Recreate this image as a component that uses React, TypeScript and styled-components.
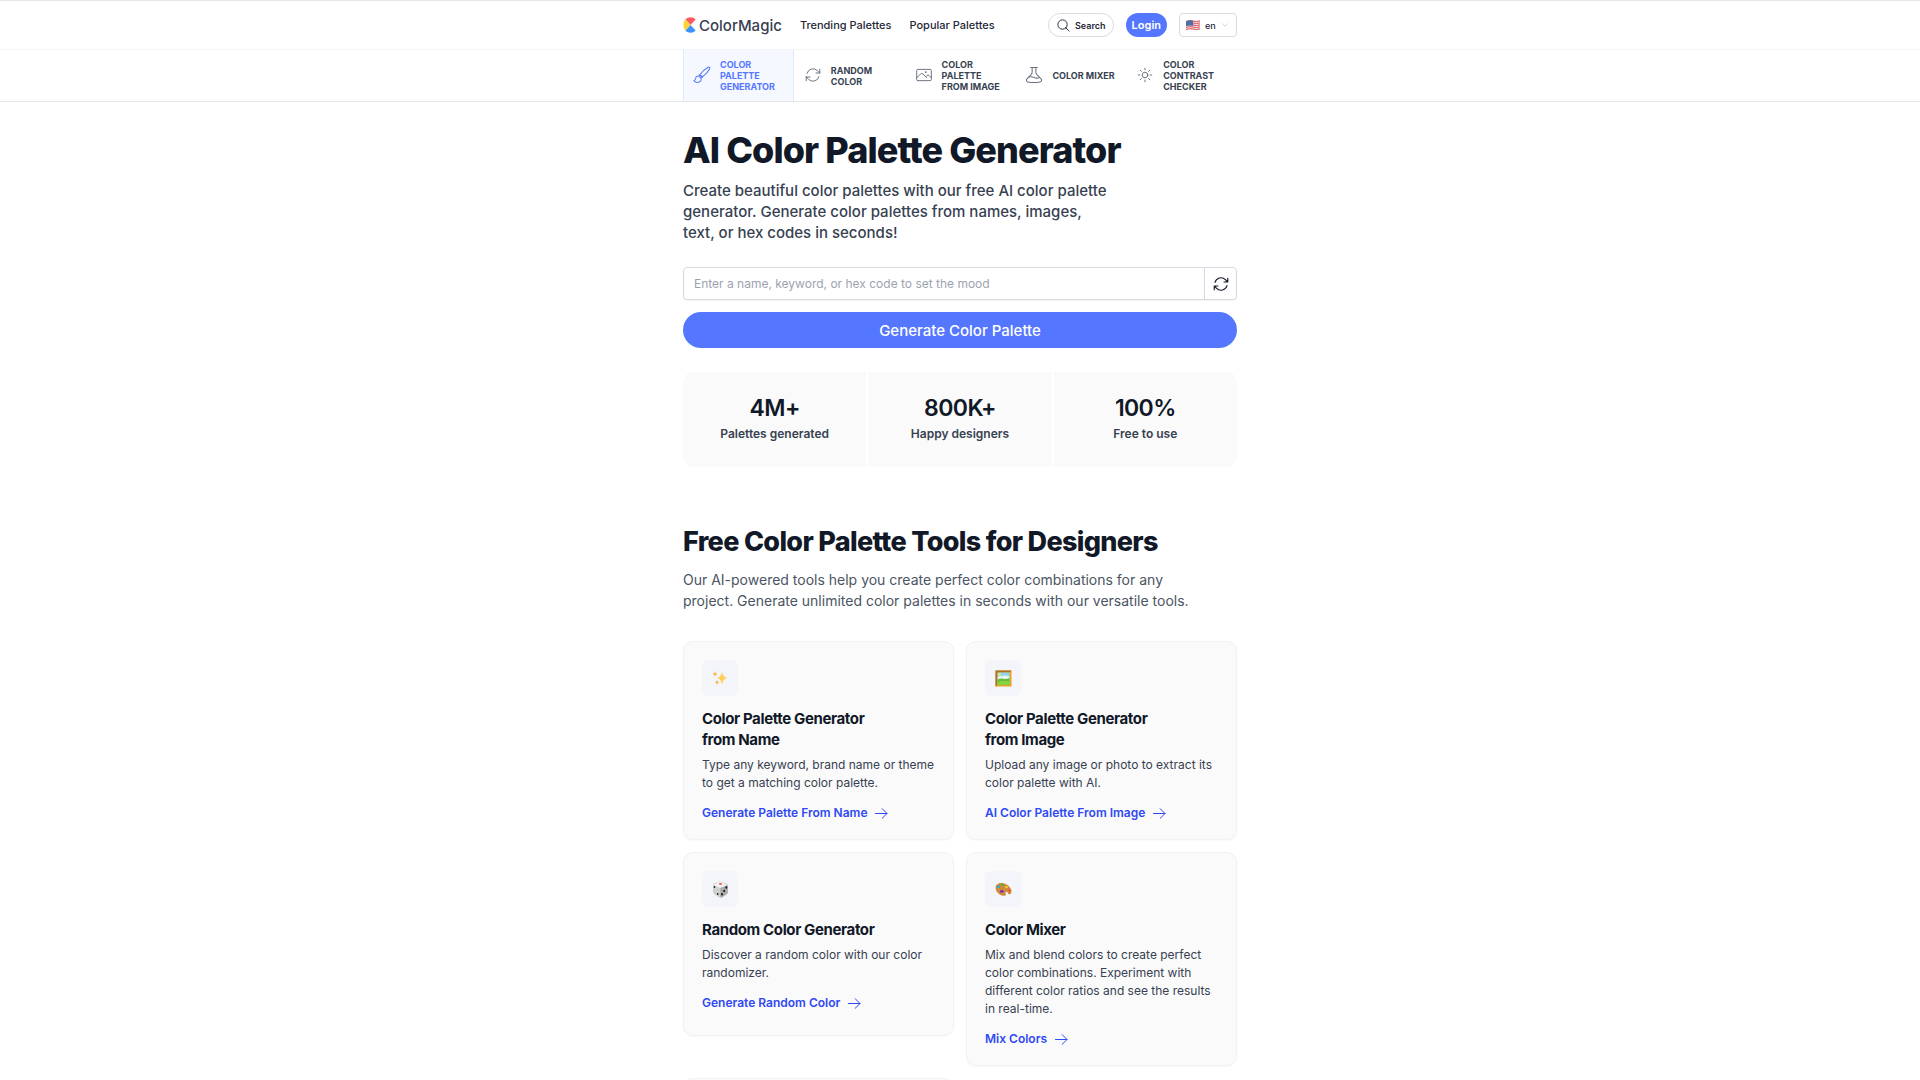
import React from "react";
import styled, { createGlobalStyle } from "styled-components";
import {
  HiOutlineArrowPath,
  HiOutlinePhoto,
  HiOutlineSun,
  HiOutlineMagnifyingGlass,
  HiOutlineChevronDown,
} from "react-icons/hi2";

const GlobalStyle = createGlobalStyle`
  *, *::before, *::after { box-sizing: border-box; }
  body {
    margin: 0;
    background: #fff;
    color: #111827;
    font-family: Inter, "Liberation Sans", sans-serif;
    font-size: 12px;
    overflow-x: hidden;
    -webkit-font-smoothing: antialiased;
  }
  h1, h2, h3, p, ul { margin: 0; padding: 0; }
  ul { list-style: none; }
  a { color: inherit; text-decoration: none; }
  button, input, select { font: inherit; color: inherit; }
  svg { display: block; flex-shrink: 0; }
`;

const Container = styled.div`
  width: 100%;
  max-width: 578px;
  margin: 0 auto;
  padding: 0 12px;
`;

const Header = styled.header`
  border-top: 1px solid #e5e7eb;
  border-bottom: 1px solid #f3f4f6;
`;

const HeaderRow = styled(Container)`
  display: flex;
  align-items: center;
  justify-content: space-between;
  height: 48px;
`;

const MainNav = styled.nav`
  display: flex;
  align-items: center;
  gap: 18px;
  font-size: 11px;
  font-weight: 500;
  color: #1f2937;
`;

const Brand = styled.a`
  display: flex;
  align-items: center;
  gap: 3px;
  font-size: 15px;
  font-weight: 500;
  color: #374151;
`;

const Actions = styled.div`
  display: flex;
  align-items: center;
  gap: 12px;
`;

const SearchButton = styled.button`
  display: flex;
  align-items: center;
  gap: 4px;
  height: 24px;
  padding: 0 7px;
  border: 1px solid #d8dbe2;
  border-radius: 12px;
  background: #fff;
  font-size: 9px;
  font-weight: 600;
  color: #1f2937;
`;

const LoginButton = styled.button`
  height: 24px;
  padding: 0 6px;
  border: 0;
  border-radius: 12px;
  background: #5577ff;
  color: #fff;
  font-size: 11px;
  font-weight: 600;
`;

const Language = styled.label`
  display: flex;
  align-items: center;
  gap: 5px;
  height: 24px;
  padding: 0 7px 0 6px;
  border: 1px solid #d8dbe2;
  border-radius: 4px;
  font-size: 9px;
  font-weight: 500;
  color: #1f2937;
`;

const LanguageSelect = styled.select`
  appearance: none;
  width: 11px;
  padding: 0;
  border: 0;
  background: transparent;
  outline: none;
`;

const ToolNav = styled.nav`
  border-bottom: 1px solid #e5e7eb;
`;

const ToolTabs = styled.ul`
  display: grid;
  grid-template-columns: repeat(5, 1fr);
`;

const ToolTab = styled.a<{ $active?: boolean }>`
  display: flex;
  align-items: center;
  gap: 9px;
  height: 51px;
  padding: 0 8px 0 9px;
  border: solid ${(p) => (p.$active ? "#dbeafe" : "transparent")};
  border-width: 0 1px;
  background: ${(p) => (p.$active ? "#f5f8ff" : "transparent")};
  color: ${(p) => (p.$active ? "#5577ff" : "#374151")};
  font-size: 9px;
  font-weight: 700;
  line-height: 11px;
  text-transform: uppercase;

  svg {
    margin-bottom: 2px;
    color: ${(p) => (p.$active ? "#5577ff" : "#6b7280")};
  }
`;

const Hero = styled.section`
  padding-top: 30px;
`;

const Title = styled.h1`
  font-size: 36px;
  font-weight: 800;
  line-height: 36px;
  letter-spacing: -0.025em;
`;

const Lead = styled.p`
  max-width: 432px;
  margin-top: 12px;
  font-size: 15px;
  font-weight: 500;
  line-height: 21px;
  color: #374151;
`;

const Prompt = styled.form`
  display: grid;
  gap: 12px;
  margin-top: 24px;
`;

const Field = styled.div`
  display: flex;
  height: 33px;
  border: 1px solid #d6d9e0;
  border-radius: 4px;
  box-shadow: 0 1px 2px rgba(0, 0, 0, 0.05);
`;

const PromptInput = styled.input`
  flex: 1;
  min-width: 0;
  padding: 0 10px;
  border: 0;
  outline: none;
  background: transparent;
  font-size: 12px;

  &::placeholder { color: #9ca3af; opacity: 1; }
`;

const ShuffleButton = styled.button`
  display: grid;
  place-items: center;
  width: 32px;
  padding: 0;
  border: 0;
  border-left: 1px solid #d6d9e0;
  background: transparent;
`;

const GenerateButton = styled.button`
  height: 36px;
  border: 0;
  border-radius: 18px;
  background: #5577ff;
  color: #fff;
  font-size: 15px;
  font-weight: 500;
`;

const Stats = styled.ul`
  display: grid;
  grid-template-columns: repeat(3, 1fr);
  gap: 2px;
  margin-top: 24px;
  border-radius: 10px;
  overflow: hidden;
`;

const Stat = styled.li`
  padding: 24px;
  background: #fafafa;
  text-align: center;
`;

const StatValue = styled.p`
  font-size: 23px;
  font-weight: 600;
  line-height: 24px;
  letter-spacing: -0.025em;
`;

const StatLabel = styled.p`
  margin-top: 5px;
  font-size: 12px;
  font-weight: 600;
  line-height: 18px;
  color: #374151;
`;

const Tools = styled.section`
  padding: 60px 0;
`;

const SectionTitle = styled.h2`
  font-size: 27px;
  font-weight: 800;
  line-height: 30px;
  letter-spacing: -0.025em;
`;

const SectionText = styled.p`
  max-width: 520px;
  margin-top: 12px;
  font-size: 14px;
  line-height: 21px;
  color: #4b5563;
`;

const Cards = styled.ul`
  display: grid;
  grid-template-columns: repeat(2, 1fr);
  align-items: start;
  gap: 12px;
  margin-top: 30px;
`;

const Card = styled.li`
  min-height: 184px;
  padding: 18px 18px 17px;
  border: 1px solid #f1f2f4;
  border-radius: 10px;
  background: #fafafa;
  box-shadow: 0 1px 2px rgba(0, 0, 0, 0.03);
`;

const Badge = styled.div`
  display: grid;
  place-items: center;
  width: 36px;
  height: 36px;
  border-radius: 6px;
  background: #f4f5fb;
`;

const CardTitle = styled.h3`
  max-width: 190px;
  margin-top: 12px;
  font-size: 15px;
  font-weight: 700;
  line-height: 21px;
  letter-spacing: -0.025em;
`;

const CardText = styled.p`
  margin-top: 6px;
  font-size: 12px;
  line-height: 18px;
  color: #374151;
`;

const CardLink = styled.a`
  display: inline-flex;
  align-items: center;
  gap: 7px;
  margin-top: 12px;
  font-size: 12px;
  font-weight: 600;
  line-height: 18px;
  color: #2f49f5;
`;

const LogoMark = () => (
  <svg width="13" height="16" viewBox="0 0 13 16" aria-hidden="true">
    <path d="M7.500 8 2.400 2.300Q4.500 .3 7.600 .3T12.700 2.500Z" fill="#ff5a5f" />
    <path d="M7.500 8 2.400 2.300Q.300 4.700 .300 8T2.400 13.700Z" fill="#ffd43b" />
    <path d="M7.500 8 2.400 13.700Q4.500 15.700 7.600 15.700T12.700 13.500Z" fill="#3b93ff" />
  </svg>
);

const Flag = () => (
  <svg width="14" height="11" viewBox="0 0 14 11" aria-hidden="true">
    <path d="M0 1.200Q3.500-.3 7 .7T14 .5V9.800Q10.500 11 7 10T0 10.700Z" fill="#f3e9ea" />
    <g stroke="#dd4a55" strokeWidth="1" fill="none">
      <path d="M0 1.500Q3.500 0 7 1T14 .9M0 3.500Q3.500 2 7 3T14 2.900M0 5.500Q3.500 4 7 5T14 4.900M0 7.500Q3.500 6 7 7T14 6.900M0 9.500Q3.500 8 7 9T14 8.900" />
    </g>
    <path d="M0 1.200Q3.500-.3 7 .7V5.800Q3.500 5 0 6.300Z" fill="#4b6fa9" />
  </svg>
);

const BrushIcon = () => (
  <svg width="18" height="18" viewBox="0 0 24 24" fill="none" stroke="currentColor" strokeWidth="1.400" strokeLinecap="round" strokeLinejoin="round" aria-hidden="true">
    <path d="M9.300 11.700C12.500 7.500 17 3.300 20.300 1.700c1.500-.6 2.500.4 1.900 1.900C20.600 7 16.500 11.500 12.300 14.700Z" />
    <path d="m9.300 11.700 3 3-1.700 1.600-2.900-2.900ZM7.700 13.400c-2-.5-3.700.8-4 2.600-.4 2.100-1 3-2.500 3.700 1.400 1.700 4.500 2.700 7 1.700 2.200-.8 3.200-3 2.400-5.100" />
  </svg>
);

const FlaskIcon = () => (
  <svg width="18" height="18" viewBox="0 0 24 24" fill="none" stroke="currentColor" strokeWidth="1.400" strokeLinecap="round" strokeLinejoin="round" aria-hidden="true">
    <path d="M7.500 2h9M9.500 2v6.200c0 1.500-.6 2.500-1.700 3.700l-5.200 5.200c-1.500 1.600-.9 3.700 1.200 4.100 5.200 1 11.200 1 16.400 0 2.100-.4 2.700-2.500 1.200-4.100l-5.200-5.200c-1.100-1.200-1.700-2.200-1.700-3.700V2" />
    <path d="M5 14.700c2.500-.9 4.800-.4 7 .6s4.800 1.200 7.400.2" />
  </svg>
);

const ArrowIcon = () => (
  <svg width="15" height="15" viewBox="0 0 15 15" fill="none" stroke="currentColor" strokeWidth="1" strokeLinecap="round" strokeLinejoin="round" aria-hidden="true">
    <path d="M1.500 7.500h11.500M8.200 2.700 13 7.500 8.200 12.300" />
  </svg>
);

const SparklesArt = () => (
  <svg width="16" height="16" viewBox="0 0 16 16" fill="#ffcf55" aria-hidden="true">
    <path d="M10 1.500Q10.700 7.300 15.300 8 10.700 8.700 10 15 9.300 8.700 5 8 9.300 7.300 10 1.500Z" />
    <path d="M3 1Q3.300 3.700 5.500 4 3.300 4.300 3 7 2.700 4.300.6 4 2.700 3.700 3 1ZM5 9.700Q5.300 12.100 7.200 12.400 5.300 12.700 5 15.200 4.700 12.700 2.800 12.400 4.700 12.100 5 9.700Z" fill="#f8b84a" />
  </svg>
);

const FrameArt = () => (
  <svg width="17" height="17" viewBox="0 0 17 17" aria-hidden="true">
    <rect x=".5" y=".5" width="16" height="16" fill="#e7a51f" />
    <path d="M.5.500h16l-2 2h-12v12l-2 2Z" fill="#a97322" />
    <path d="M2.500 2.500h12v12h-12Z" fill="#8ed5f1" />
    <path d="M3 7q2-2 4-.8 3-1.700 7.500.3v3H2.500Z" fill="#e7f4ef" />
    <path d="M2.500 9.500q3-1.500 6-.7t6-1v6.700h-12Z" fill="#63bd3a" />
    <path d="M2.500 12q5-1.500 12-.5v3h-12Z" fill="#86d63c" />
    <circle cx="4.500" cy="4.300" r="1.300" fill="#ffe36a" />
  </svg>
);

const DiceArt = () => (
  <svg width="17" height="17" viewBox="0 0 17 17" aria-hidden="true">
    <path d="M1 4.500Q1 3 2.500 2.500L7 .8q1.500-.5 3 0l4.500 1.700Q16 3 16 4.500V11q0 1.500-1.200 2.300l-4.300 2.800q-2 1-4 0l-4.300-2.800Q1 12.500 1 11Z" fill="#cfcfcf" />
    <path d="M1.300 4.200 7 1q1.500-.6 3 0l5.700 3.200L8.500 7Z" fill="#f1f1f1" />
    <path d="M8.300 7 15.800 4v7q0 1.500-1.200 2.300l-4 2.700q-1 .6-2.300.5Z" fill="#a9a9a9" />
    <ellipse cx="8.500" cy="2.900" rx="1.500" ry=".8" fill="#e8413c" />
    <g fill="#161616">
      <ellipse cx="2.500" cy="6" rx=".8" ry="1.100" />
      <ellipse cx="5.700" cy="13" rx=".8" ry="1.100" />
      <ellipse cx="14.300" cy="6.500" rx=".9" ry="1.200" />
      <ellipse cx="12.200" cy="9.900" rx=".9" ry="1.200" />
      <ellipse cx="10" cy="13.300" rx=".9" ry="1.200" />
    </g>
  </svg>
);

const PaletteArt = () => (
  <svg width="17" height="17" viewBox="0 0 17 17" aria-hidden="true">
    <path d="M.6 6.500C.8 3 4 1.500 7.500 2c4.500.7 8.500 4 9 8 .3 2.500-1.500 4-3 3-.9-.6-.5-2-1.700-2.300-1.500-.3-1.300 1.300-1 2.200.5 1.700-1 2.200-3 1.800C4 14 .4 10.500.600 6.500Z" fill="#d18a36" />
    <ellipse cx="7.500" cy="3.800" rx="1.700" ry="1" fill="#46b838" />
    <ellipse cx="3.600" cy="5.800" rx="1.700" ry="1.300" fill="#27a9dd" />
    <ellipse cx="6.800" cy="10.400" rx="1.900" ry="1.400" fill="#7a2fd0" />
    <ellipse cx="11.500" cy="6" rx="1.500" ry="1.100" fill="#f5cf35" />
    <ellipse cx="14.300" cy="9.200" rx="1.200" ry="1.400" fill="#e95c3d" />
  </svg>
);

const tabs = [
  { label: "Color Palette Generator", icon: <BrushIcon />, active: true },
  { label: "Random Color", icon: <HiOutlineArrowPath size={18} strokeWidth={1.3} /> },
  { label: "Color Palette from Image", icon: <HiOutlinePhoto size={18} strokeWidth={1.3} /> },
  { label: "Color Mixer", icon: <FlaskIcon /> },
  { label: "Color Contrast Checker", icon: <HiOutlineSun size={18} strokeWidth={1.3} /> },
];

const stats = [
  { value: "4M+", label: "Palettes generated" },
  { value: "800K+", label: "Happy designers" },
  { value: "100%", label: "Free to use" },
];

const cards = [
  {
    art: <SparklesArt />,
    title: "Color Palette Generator from Name",
    text: "Type any keyword, brand name or theme to get a matching color palette.",
    link: "Generate Palette From Name",
  },
  {
    art: <FrameArt />,
    title: "Color Palette Generator from Image",
    text: "Upload any image or photo to extract its color palette with AI.",
    link: "AI Color Palette From Image",
  },
  {
    art: <DiceArt />,
    title: "Random Color Generator",
    text: "Discover a random color with our color randomizer.",
    link: "Generate Random Color",
  },
  {
    art: <PaletteArt />,
    title: "Color Mixer",
    text: "Mix and blend colors to create perfect color combinations. Experiment with different color ratios and see the results in real-time.",
    link: "Mix Colors",
  },
];

export default function App() {
  return (
    <>
      <GlobalStyle />
      <Header>
        <HeaderRow>
          <MainNav aria-label="Main">
            <Brand href="#">
              <LogoMark />
              ColorMagic
            </Brand>
            <a href="#trending">Trending Palettes</a>
            <a href="#popular">Popular Palettes</a>
          </MainNav>
          <Actions>
            <SearchButton type="button">
              <HiOutlineMagnifyingGlass size={15} />
              Search
            </SearchButton>
            <LoginButton type="button">Login</LoginButton>
            <Language>
              <Flag />
              <LanguageSelect aria-label="Language" defaultValue="en">
                <option value="en">en</option>
              </LanguageSelect>
              <HiOutlineChevronDown size={8} color="#9ca3af" />
            </Language>
          </Actions>
        </HeaderRow>
      </Header>
      <ToolNav aria-label="Tools">
        <Container>
          <ToolTabs>
            {tabs.map((tab) => (
              <li key={tab.label}>
                <ToolTab href="#" $active={tab.active}>
                  {tab.icon}
                  <span>{tab.label}</span>
                </ToolTab>
              </li>
            ))}
          </ToolTabs>
        </Container>
      </ToolNav>
      <Container as="main">
        <Hero>
          <Title>AI Color Palette Generator</Title>
          <Lead>
            Create beautiful color palettes with our free AI color palette generator. Generate color
            palettes from names, images, text, or hex codes in seconds!
          </Lead>
          <Prompt onSubmit={(event) => event.preventDefault()}>
            <Field>
              <PromptInput
                type="text"
                aria-label="Palette prompt"
                placeholder="Enter a name, keyword, or hex code to set the mood"
              />
              <ShuffleButton type="button" aria-label="Shuffle prompt">
                <HiOutlineArrowPath size={18} />
              </ShuffleButton>
            </Field>
            <GenerateButton type="submit">Generate Color Palette</GenerateButton>
          </Prompt>
          <Stats>
            {stats.map((stat) => (
              <Stat key={stat.label}>
                <StatValue>{stat.value}</StatValue>
                <StatLabel>{stat.label}</StatLabel>
              </Stat>
            ))}
          </Stats>
        </Hero>
        <Tools>
          <SectionTitle>Free Color Palette Tools for Designers</SectionTitle>
          <SectionText>
            Our AI-powered tools help you create perfect color combinations for any project. Generate
            unlimited color palettes in seconds with our versatile tools.
          </SectionText>
          <Cards>
            {cards.map((card) => (
              <Card key={card.title}>
                <Badge>{card.art}</Badge>
                <CardTitle>{card.title}</CardTitle>
                <CardText>{card.text}</CardText>
                <CardLink href="#">
                  {card.link}
                  <ArrowIcon />
                </CardLink>
              </Card>
            ))}
            <Card aria-hidden="true" />
          </Cards>
        </Tools>
      </Container>
    </>
  );
}
